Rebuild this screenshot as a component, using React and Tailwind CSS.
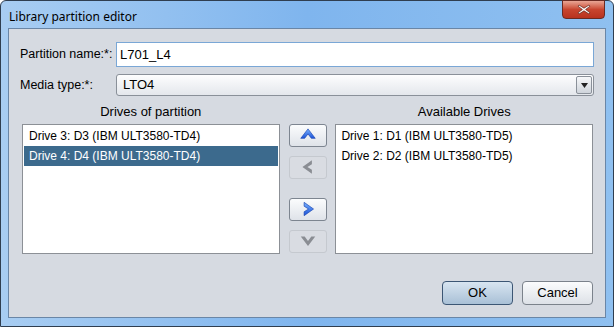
import React from "react";

const font = { fontFamily: '"Liberation Sans", Arial, sans-serif' };

function ArrowButton({ dir, enabled }) {
  const paths = {
    up: "M2.5 12 L9 3.5 L15.5 12 L12 12 L9 8 L6 12 Z",
    left: "M12.5 3 L4 9 L12.5 15 L12.5 11.5 L8.5 9 L12.5 6.5 Z",
    right: "M5.5 3 L14 9 L5.5 15 L5.5 11.5 L9.5 9 L5.5 6.5 Z",
    down: "M2.5 5 L9 13.5 L15.5 5 L12 5 L9 9 L6 5 Z",
  };
  return (
    <div
      className={
        "w-[38px] h-[23px] rounded-[3px] border flex items-center justify-center " +
        (enabled
          ? "border-[#7d8590] bg-gradient-to-b from-[#fbfcfd] to-[#dfe3e9]"
          : "border-[#c5c9cf] bg-[#d9dce2]")
      }
    >
      <svg width="20" height="20" viewBox="0 0 18 18">
        <defs>
          <linearGradient id={"g" + dir} x1="0" y1="0" x2="0" y2="1">
            <stop offset="0" stopColor="#7ab2ff" />
            <stop offset="1" stopColor="#1a52d8" />
          </linearGradient>
        </defs>
        <path
          d={paths[dir]}
          fill={enabled ? "url(#g" + dir + ")" : "#8a8d93"}
          stroke={enabled ? "#1a45b0" : "none"}
          strokeWidth="0.6"
          strokeLinejoin="round"
        />
      </svg>
    </div>
  );
}

export default function App() {
  return (
    <div className="w-[614px] h-[327px] overflow-hidden bg-white" style={font}>
      <div className="w-[614px] h-[327px] flex flex-col rounded-t-[6px] border border-[#2f3e50] bg-gradient-to-r from-[#a8cdf2] via-[#7fb5ee] to-[#8fc0f0]">
        <div className="h-[27px] flex items-start justify-between pl-[8px] pr-[8px]">
          <span className="mt-[7px] text-[12px] text-black" style={{ fontFamily: '"Noto Sans", "Liberation Sans", sans-serif' }}>
            Library partition editor
          </span>
          <div className="w-[43px] h-[19px] mt-[-1px] rounded-b-[4px] border border-[#6b2a22] bg-gradient-to-b from-[#e8a595] via-[#c8452f] to-[#b8321f] flex items-center justify-center">
            <svg width="14" height="11" viewBox="0 0 14 11">
              <path d="M2 1 L7 4.2 L12 1 L13 2.2 L8.6 5.5 L13 8.8 L12 10 L7 6.8 L2 10 L1 8.8 L5.4 5.5 L1 2.2 Z" fill="#fff" stroke="#5b2017" strokeWidth="0.7" />
            </svg>
          </div>
        </div>
        <div className="flex-1 mx-[7px] mb-[8px] border border-[#6a86a6] bg-[#d6dae1] flex flex-col text-[12px] text-black">
          <div className="pl-[11px] pr-[11px] pt-[13px] flex flex-col">
            <div className="flex items-center h-[25px]">
              <span className="w-[96px] text-[12.5px]">Partition name:*:</span>
              <div className="flex-1 h-[25px] border border-[#7aa7d6] bg-white flex items-center px-[3px] text-[13px]">
                L701_L4
              </div>
            </div>
            <div className="flex items-center h-[22px] mt-[7px]">
              <span className="w-[96px] text-[12.5px]">Media type:*:</span>
              <div className="flex-1 h-[22px] rounded-[3px] border border-[#8a9099] bg-gradient-to-b from-[#fdfdfe] to-[#e4e7ec] flex items-center pl-[6px] pr-[1px]">
                <span className="flex-1 text-[13px]">LTO4</span>
                <div className="w-[16px] h-[18px] rounded-[2px] border border-[#8a9099] bg-gradient-to-b from-[#f6f7f9] to-[#cfd4db] flex items-center justify-center">
                  <svg width="7" height="5" viewBox="0 0 7 5">
                    <path d="M0 0 L7 0 L3.5 5 Z" fill="#222" />
                  </svg>
                </div>
              </div>
            </div>
          </div>
          <div className="flex pl-[13px] pr-[12px] mt-[6px]">
            <div className="w-[258px] text-center text-[13px]">Drives of partition</div>
            <div className="w-[56px]" />
            <div className="w-[258px] text-center text-[13px]">Available Drives</div>
          </div>
          <div className="flex pl-[13px] pr-[12px] mt-[2px]">
            <div className="w-[258px] h-[130px] border border-[#8c9096] bg-white p-px">
              <div className="h-[20px] flex items-center pl-[5px]">Drive 3: D3 (IBM ULT3580-TD4)</div>
              <div className="h-[20px] flex items-center pl-[5px] bg-[#3c6a8d] text-white">Drive 4: D4 (IBM ULT3580-TD4)</div>
            </div>
            <div className="w-[56px] flex flex-col items-center">
              <ArrowButton dir="up" enabled />
              <div className="mt-[9px]"><ArrowButton dir="left" /></div>
              <div className="mt-[19px]"><ArrowButton dir="right" enabled /></div>
              <div className="mt-[9px]"><ArrowButton dir="down" /></div>
            </div>
            <div className="w-[258px] h-[130px] border border-[#8c9096] bg-white p-px">
              <div className="h-[20px] flex items-center pl-[4px]">Drive 1: D1 (IBM ULT3580-TD5)</div>
              <div className="h-[20px] flex items-center pl-[4px]">Drive 2: D2 (IBM ULT3580-TD5)</div>
            </div>
          </div>
          <div className="flex justify-end gap-[9px] pr-[12px] mt-[27px]">
            <div className="w-[71px] h-[24px] rounded-[4px] border border-[#3c5674] bg-gradient-to-b from-[#d8e5f1] to-[#a9c0d6] flex items-center justify-center text-[13px]">
              OK
            </div>
            <div className="w-[71px] h-[24px] rounded-[4px] border border-[#7b828b] bg-gradient-to-b from-[#fbfcfd] to-[#dde1e7] flex items-center justify-center text-[13px]">
              Cancel
            </div>
          </div>
        </div>
      </div>
    </div>
  );
}
